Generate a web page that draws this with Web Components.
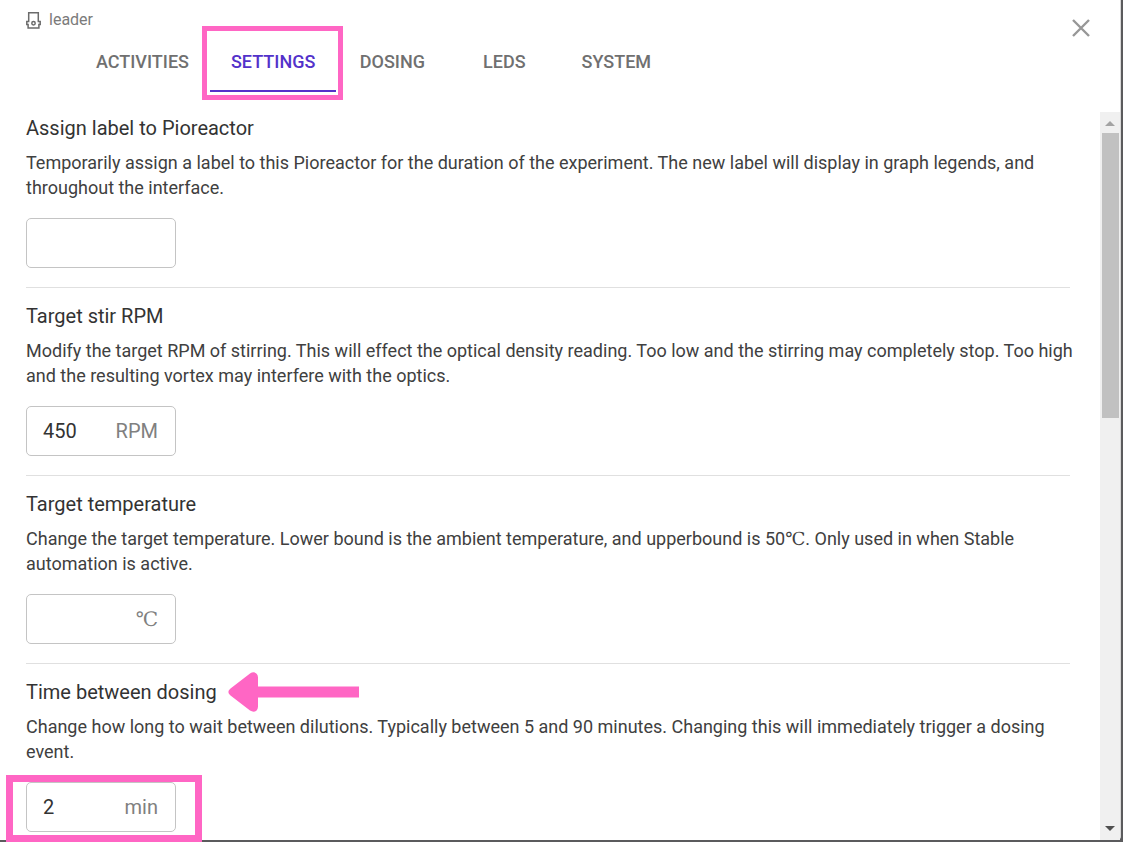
<!DOCTYPE html>
<html lang="en">
<head>
<meta charset="utf-8">
<title>Pioreactor settings</title>
<style>
  html, body { margin: 0; height: 100%; overflow: hidden; }
  body { background: #5b5b5d; font-family: Roboto, "Liberation Serif", "DejaVu Serif", serif; color: #333; }
</style>
</head>
<body>
<settings-dialog>
  <dialog-header slot="header" name="leader"></dialog-header>
  <tab-bar slot="header">
    <tab-item>ACTIVITIES</tab-item>
    <tab-item selected>SETTINGS</tab-item>
    <tab-item>DOSING</tab-item>
    <tab-item>LEDS</tab-item>
    <tab-item>SYSTEM</tab-item>
  </tab-bar>
  <setting-section heading="Assign label to Pioreactor">Temporarily assign a label to this Pioreactor for the duration of the experiment. The new label will display in graph legends, and throughout the interface.</setting-section>
  <setting-section heading="Target stir RPM" value="450" unit="RPM">Modify the target RPM of stirring. This will effect the optical density reading. Too low and the stirring may completely stop. Too high and the resulting vortex may interfere with the optics.</setting-section>
  <setting-section heading="Target temperature" unit="℃">Change the target temperature. Lower bound is the ambient temperature, and upperbound is 50℃. Only used in when Stable automation is active.</setting-section>
  <setting-section heading="Time between dosing" value="2" unit="min" highlighted>Change how long to wait between dilutions. Typically between 5 and 90 minutes. Changing this will immediately trigger a dosing event.</setting-section>
</settings-dialog>
<script>
class BaseElement extends HTMLElement {
  constructor() {
    super();
    this.attachShadow({ mode: 'open' });
  }
  connectedCallback() {
    this.shadowRoot.innerHTML = this.render();
  }
}

customElements.define('settings-dialog', class extends BaseElement {
  render() {
    return `<style>
      :host { display: flex; flex-direction: column; box-sizing: border-box; height: calc(100vh - 2px); margin-right: 2px;
        background: #fff; border-right: 1px solid #d8d8d8; border-bottom-right-radius: 4px; }
      header { flex: none; height: 112px; }
      .body { flex: 1; min-height: 0; display: flex; }
      main { flex: 1; min-width: 0; padding: 1px 30px 0 26px; }
    </style>
    <header><slot name="header"></slot></header>
    <div class="body"><main><slot></slot></main><scroll-bar></scroll-bar></div>`;
  }
});

customElements.define('dialog-header', class extends BaseElement {
  render() {
    return `<style>
      :host { display: flex; justify-content: space-between; height: 32px; padding: 0 25px 0 26px; }
      .name { display: flex; align-items: center; gap: 8px; height: 40px; font-size: 16px; line-height: 20px; color: #7b7b7b; }
      button { flex: none; width: 28px; height: 28px; padding: 0; margin-top: 14px; border: 0; background: none; }
      svg { display: block; }
    </style>
    <div class="name">
      <svg width="15" height="17" viewBox="0 0 15 17" fill="none" stroke="#6b6b6b" stroke-width="1.5">
        <path d="M2.700 9.500V.8h9.600v8.700M3.400 9.500H.8v3h1.300v3.400h10.800v-3.400h1.300v-3h-2.600"/><circle cx="7.5" cy="11.300" r="1.700"/>
      </svg>
      <span>${this.getAttribute('name')}</span>
    </div>
    <button aria-label="Close"><svg width="28" height="28" viewBox="0 0 28 28" stroke="#979797" stroke-width="2.4"><path d="M6 6l16 16M22 6L6 22"/></svg></button>`;
  }
});

customElements.define('tab-bar', class extends BaseElement {
  render() {
    return `<style>:host { display: flex; padding-left: 75px; }</style><slot></slot>`;
  }
});

customElements.define('tab-item', class extends BaseElement {
  render() {
    return `<style>
      :host { display: block; position: relative; }
      button { display: block; box-sizing: border-box; min-width: 112px; height: 60px; padding: 2px 21px 0; border: 0;
        border-bottom: 2px solid transparent; background: none; font: 500 18px/24px Roboto, "Liberation Sans", sans-serif; color: #707070; }
      :host([selected]) button { color: #5331ca; border-bottom-color: #5331ca; }
      :host([selected])::after { content: ""; position: absolute; inset: -6px -7px -8px -8px; border: 5px solid #ff66c4; pointer-events: none; }
    </style>
    <button><slot></slot></button>`;
  }
});

customElements.define('setting-section', class extends BaseElement {
  render() {
    const unit = this.getAttribute('unit') || '';
    const arrow = this.hasAttribute('highlighted')
      ? `<svg width="131" height="40" viewBox="0 0 131 40" fill="#ff66c4"><path d="M131 14.500H30V5.500C30 .8 26 -1 22 1.500L2.500 16.500Q-1.800 20 2.500 23.500L22 38.500C26 41 30 39.200 30 34.500V25.500H131Z"/></svg>` : '';
    return `<style>
      :host { display: block; padding-bottom: 19px; margin-bottom: 13px; border-bottom: 1px solid #e0e0e0; }
      :host(:last-of-type) { border-bottom: 0; margin-bottom: 0; }
      label { display: table; position: relative; font-size: 20px; line-height: 30px; }
      label svg { position: absolute; left: 100%; top: -5px; margin-left: 11px; }
      p { margin: 7px -8px 18px 0; font-size: 18px; line-height: 25px; color: #404040; }
      .field { position: relative; display: flex; align-items: center; box-sizing: border-box; width: 150px; height: 50px;
        padding: 0 17px 0 16px; border: 1px solid #c4c4c4; border-radius: 5px; font-size: 20px; line-height: 28px; }
      input { flex: 1; min-width: 0; padding: 0; border: 0; outline: 0; background: none; font: inherit; color: inherit; }
      .unit { color: #808080; }
      :host([highlighted]) .field::after { content: ""; position: absolute; inset: -8px -27px -11px -21px; border: 7px solid #ff66c4; pointer-events: none; }
    </style>
    <label for="value">${this.getAttribute('heading')}${arrow}</label>
    <p><slot></slot></p>
    <div class="field"><input id="value" value="${this.getAttribute('value') || ''}"><span class="unit">${unit}</span></div>`;
  }
});

customElements.define('scroll-bar', class extends BaseElement {
  render() {
    return `<style>
      :host { display: flex; flex-direction: column; flex: none; width: 20px; background: #f0f0f0; }
      svg { display: block; flex: none; }
      .track { flex: 1; padding: 0 1px 0 2px; }
      .thumb { height: 41.5%; background: #c1c1c1; }
    </style>
    <svg width="20" height="21" viewBox="0 0 20 21" fill="#a3a3a3"><path d="M5 14h10l-5-5z"/></svg>
    <div class="track"><div class="thumb"></div></div>
    <svg width="20" height="21" viewBox="0 0 20 21" fill="#505050"><path d="M5 7h10l-5 5z"/></svg>`;
  }
});
</script>
</body>
</html>
